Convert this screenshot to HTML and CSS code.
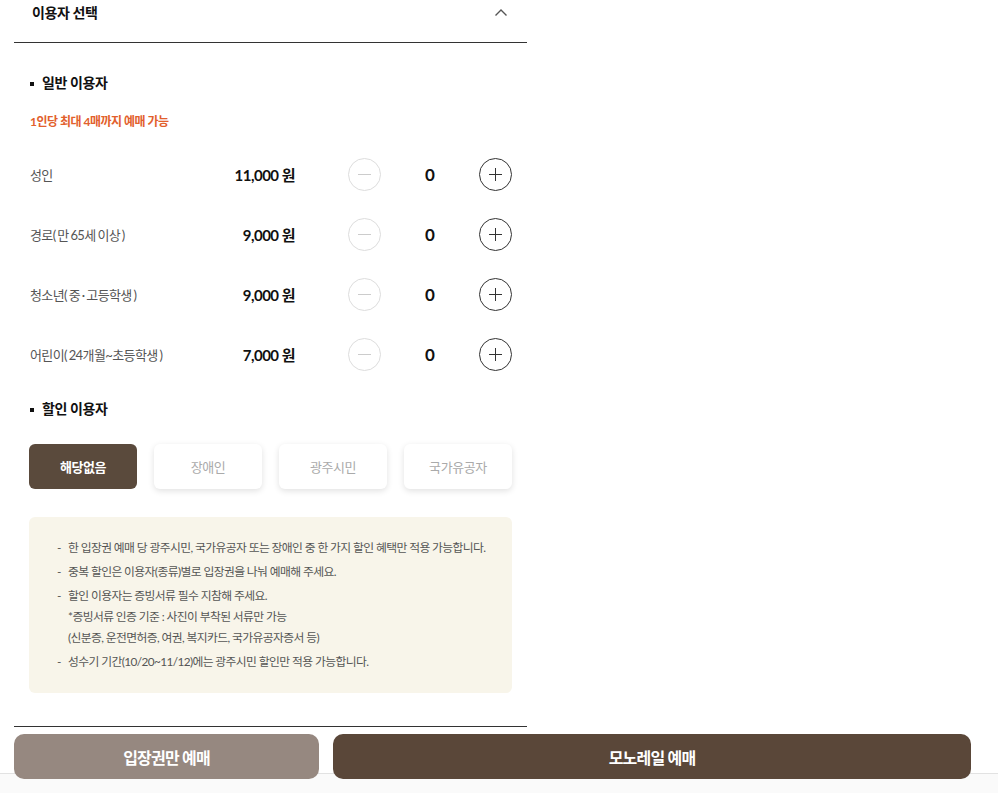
FILE: index.html
```html
<!DOCTYPE html>
<html lang="ko">
<head>
  <meta charset="UTF-8" />
  <meta name="viewport" content="width=device-width, initial-scale=1" />
  <title>이용자 선택</title>
  <link rel="stylesheet" href="styles.css">
</head>
<body>
  <div class="wrap">
    <div class="sec-head">
      <h2>이용자 선택</h2>
      <svg class="chevron" width="14" height="9" viewBox="0 0 14 9"><path d="M1.5 7.5 L7 2 L12.5 7.5" fill="none" stroke="#555" stroke-width="1.4"/></svg>
    </div>

    <h3 class="group-title">일반 이용자</h3>
    <p class="limit">1인당 최대 4매까지 예매 가능</p>

    <div class="rows">
      <div class="row">
        <span class="label">성인</span>
        <span class="price">11,000 원</span>
        <button class="cnt minus" aria-label="감소"></button>
        <span class="count">0</span>
        <button class="cnt plus" aria-label="증가"></button>
      </div>
      <div class="row">
        <span class="label">경로( 만 65세 이상 )</span>
        <span class="price">9,000 원</span>
        <button class="cnt minus" aria-label="감소"></button>
        <span class="count">0</span>
        <button class="cnt plus" aria-label="증가"></button>
      </div>
      <div class="row">
        <span class="label">청소년( 중 · 고등학생 )</span>
        <span class="price">9,000 원</span>
        <button class="cnt minus" aria-label="감소"></button>
        <span class="count">0</span>
        <button class="cnt plus" aria-label="증가"></button>
      </div>
      <div class="row">
        <span class="label">어린이( 24개월~초등학생 )</span>
        <span class="price">7,000 원</span>
        <button class="cnt minus" aria-label="감소"></button>
        <span class="count">0</span>
        <button class="cnt plus" aria-label="증가"></button>
      </div>
    </div>

    <h3 class="group-title discount">할인 이용자</h3>
    <div class="dc-list">
      <button class="dc active">해당없음</button>
      <button class="dc">장애인</button>
      <button class="dc">광주시민</button>
      <button class="dc">국가유공자</button>
    </div>

    <ul class="notice">
      <li>한 입장권 예매 당 광주시민, 국가유공자 또는 장애인 중 한 가지 할인 혜택만 적용 가능합니다.</li>
      <li>중복 할인은 이용자(종류)별로 입장권을 나눠 예매해 주세요.</li>
      <li>할인 이용자는 증빙서류 필수 지참해 주세요.<br>*증빙서류 인증 기준 : 사진이 부착된 서류만 가능<br>(신분증, 운전면허증, 여권, 복지카드, 국가유공자증서 등)</li>
      <li>성수기 기간(10/20~11/12)에는 광주시민 할인만 적용 가능합니다.</li>
    </ul>

    <div class="end-line"></div>
  </div>

  <div class="footer-band"></div>

  <div class="bottom-bar">
    <button class="bb ticket">입장권만 예매</button>
    <button class="bb mono">모노레일 예매</button>
  </div>
</body>
</html>
```

FILE: styles.css
```css
body {
  margin: 0;
  font-family: 'Lato', 'Noto Sans CJK KR', sans-serif;
  color: #222;
  background: #fff;
}
button {
  font-family: inherit;
  cursor: pointer;
}
.wrap {
  width: 513px;
  margin-left: 14px;
}
.sec-head {
  height: 42px;
  border-bottom: 1px solid #333;
  display: flex;
  justify-content: space-between;
  align-items: flex-start;
  padding: 0 19px 0 18px;
}
.sec-head h2 {
  margin: 4px 0 0;
  font-size: 14px;
  line-height: 18px;
  font-weight: 700;
  color: #111;
  letter-spacing: -0.4px;
}
.chevron {
  margin-top: 8px;
}
.group-title {
  margin: 30px 0 0;
  padding-left: 28px;
  position: relative;
  font-size: 14px;
  line-height: 20px;
  font-weight: 700;
  color: #111;
  letter-spacing: -0.4px;
}
.group-title::before {
  content: "";
  position: absolute;
  left: 16px;
  top: 9px;
  width: 4px;
  height: 4px;
  background: #111;
}
.group-title.discount {
  margin-top: 15px;
}
.limit {
  margin: 19px 0 0 16px;
  font-size: 12px;
  line-height: 20px;
  font-weight: 700;
  color: #e2602c;
  letter-spacing: -0.5px;
}
.rows {
  margin-top: 12px;
  padding: 0 15px 0 16px;
}
.row {
  height: 60px;
  display: flex;
  align-items: center;
}
.label {
  width: 160px;
  font-size: 13px;
  color: #555;
  letter-spacing: -0.6px;
  word-spacing: -1px;
}
.price {
  width: 105px;
  text-align: right;
  font-size: 15px;
  font-weight: 700;
  color: #111;
  letter-spacing: -0.5px;
}
.cnt {
  width: 33px;
  height: 33px;
  border-radius: 50%;
  background: #fff;
  padding: 0;
  position: relative;
}
.cnt::before, .cnt::after {
  content: "";
  position: absolute;
  left: 50%;
  top: 50%;
  background: #333;
}
.cnt::before {
  width: 13px;
  height: 1px;
  margin: -0.5px 0 0 -6.5px;
}
.cnt::after {
  width: 1px;
  height: 13px;
  margin: -6.5px 0 0 -0.5px;
}
.minus {
  margin-left: 53px;
  border: 1px solid #ddd;
}
.minus::before {
  background: #ccc;
}
.minus::after {
  display: none;
}
.plus {
  border: 1px solid #333;
}
.count {
  width: 98px;
  text-align: center;
  font-size: 17px;
  font-weight: 700;
  color: #111;
}
.dc-list {
  margin-top: 25px;
  padding: 0 15px;
  display: grid;
  grid-template-columns: repeat(4, 1fr);
  gap: 17px;
}
.dc {
  height: 45px;
  border: none;
  border-radius: 6px;
  background: #fff;
  color: #aaa;
  font-size: 13px;
  letter-spacing: -0.4px;
  box-shadow: 0 2px 6px rgba(0, 0, 0, 0.12);
}
.dc.active {
  background: #5a4a3c;
  color: #fff;
  font-weight: 700;
  box-shadow: none;
}
.notice {
  margin: 28px 15px 0;
  padding: 20px 10px 21px 39px;
  background: #f8f5ea;
  border-radius: 6px;
  list-style: none;
  font-size: 11.8px;
  line-height: 21px;
  color: #555;
  letter-spacing: -0.6px;
}
.notice li {
  position: relative;
  margin-top: 3px;
  white-space: nowrap;
}
.notice li:first-child {
  margin-top: 0;
}
.notice li::before {
  content: "-";
  position: absolute;
  left: -11px;
}
.end-line {
  margin-top: 33px;
  border-top: 1px solid #333;
}
.footer-band {
  margin-top: 46px;
  height: 19px;
  background: #fafafa;
  border-top: 1px solid #e2e2e2;
}
.bottom-bar {
  position: fixed;
  left: 14px;
  right: 27px;
  bottom: 16px;
  display: flex;
  gap: 14px;
}
.bb {
  height: 45px;
  border: none;
  border-radius: 10px;
  color: #fff;
  font-size: 16px;
  font-weight: 700;
  letter-spacing: -0.8px;
}
.bb.ticket {
  width: 305px;
  background: #968880;
}
.bb.mono {
  flex: 1;
  background: #5a4739;
}
```
